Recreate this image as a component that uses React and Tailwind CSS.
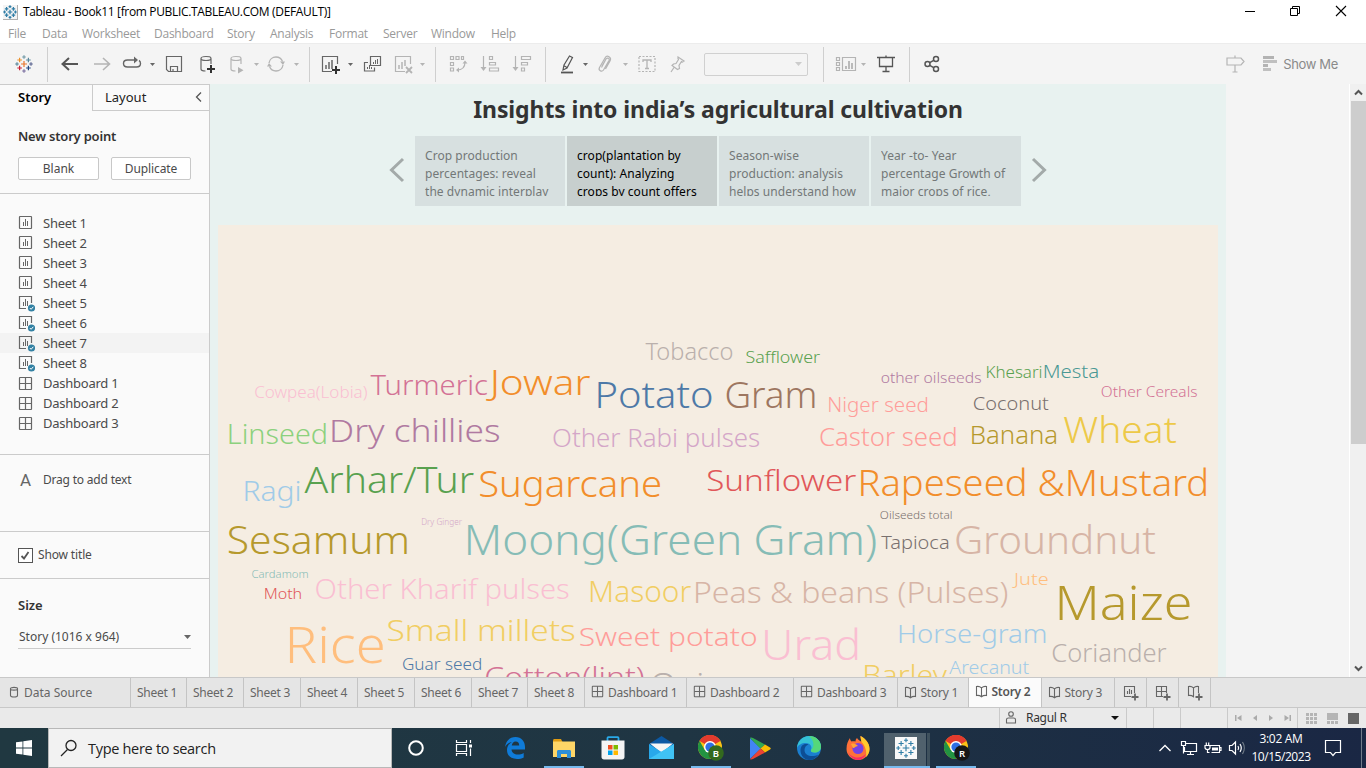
import React from "react";

const sans = "font-['Noto_Sans',sans-serif]";
const segoe = "font-['Open_Sans',sans-serif]";

/* ---------- word cloud: text, ink left, ink right, baseline, size, colour ---------- */
const WORDS = [
  ["Tobacco", 645.7, 732.3, 360, 23, "#bab0ac"],
  ["Safflower", 746.2, 819.9, 362.7, 16, "#59a14f"],
  ["Cowpea(Lobia)", 255, 366.7, 398, 16, "#fabfd2"],
  ["Turmeric", 370.7, 487.7, 395, 28, "#d37295"],
  ["Jowar", 490, 590, 394.7, 35, "#f28e2b"],
  ["Potato", 597.7, 711.7, 408, 36.5, "#4e79a7"],
  ["Gram", 726.2, 814.5, 408, 36.5, "#9d7660"],
  ["other oilseeds", 881.4, 980.8, 382.7, 14.5, "#b07aa1"],
  ["Khesari", 986.9, 1041.3, 377.3, 16, "#59a14f"],
  ["Mesta", 1044.3, 1098.3, 378, 18, "#499894"],
  ["Other Cereals", 1101.5, 1196.8, 397, 14.5, "#d37295"],
  ["Niger seed", 829, 927.3, 412, 19.5, "#ff9d9a"],
  ["Coconut", 973.7, 1048.7, 410, 19, "#79706e"],
  ["Linseed", 229.3, 325.9, 443.7, 27.5, "#8cd17d"],
  ["Dry chillies", 332, 499, 441.7, 32, "#b07aa1"],
  ["Other Rabi pulses", 553.3, 759, 447, 25, "#d4a6c8"],
  ["Castor seed", 820.2, 955.8, 446, 25, "#ff9d9a"],
  ["Banana", 972, 1056.9, 444, 25, "#b6992d"],
  ["Wheat", 1063.6, 1176.5, 443, 36.5, "#edc948"],
  ["Ragi", 245, 299.3, 501, 28, "#a0cbe8"],
  ["Arhar/Tur", 305, 473.7, 492.7, 36, "#59a14f"],
  ["Sugarcane", 480, 660.3, 496.3, 36, "#f28e2b"],
  ["Sunflower", 707.7, 856, 490.7, 30, "#e15759"],
  ["Rapeseed &Mustard", 860.8, 1206.3, 495.7, 36.5, "#f28e2b"],
  ["Oilseeds total", 880.4, 951.7, 519, 11, "#79706e"],
  ["Tapioca", 881.4, 948.7, 549, 18.5, "#79706e"],
  ["Groundnut", 955.8, 1155.6, 553.7, 38.5, "#d7b5a6"],
  ["Moong(Green Gram)", 467.7, 875, 554.7, 43, "#86bcb6"],
  ["Dry Ginger", 422, 461.9, 525, 8.5, "#d4a6c8"],
  ["Sesamum", 228.7, 407, 553.7, 38, "#b6992d"],
  ["Cardamom", 252, 307.7, 578, 10.5, "#86bcb6"],
  ["Moth", 265, 301, 598.7, 15, "#e15759"],
  ["Other Kharif pulses", 316, 568.3, 598.7, 28, "#fabfd2"],
  ["Masoor", 590.7, 691, 601.7, 28.5, "#f1ce63"],
  ["Peas & beans (Pulses)", 695.7, 1006.8, 602.7, 30, "#d7b5a6"],
  ["Jute", 1014.3, 1047.8, 585, 16, "#ffbe7d"],
  ["Maize", 1058.9, 1190, 619.7, 48.5, "#b6992d"],
  ["Horse-gram", 899.3, 1045.4, 642.7, 26, "#a0cbe8"],
  ["Rice", 289, 383.3, 662.7, 49.5, "#ffbe7d"],
  ["Small millets", 388, 574.3, 640.7, 29.5, "#f1ce63"],
  ["Sweet potato", 580, 756.3, 645.7, 26.5, "#ff9d9a"],
  ["Urad", 765, 857.7, 659.7, 43, "#fabfd2"],
  ["Coriander", 1052.5, 1166.4, 661.7, 25, "#bab0ac"],
  ["Arecanut", 949.4, 1029, 674, 18, "#a0cbe8"],
  ["Guar seed", 402.7, 481, 669.7, 16, "#4e79a7"],
  ["Cotton(lint)", 485.7, 643.3, 686.7, 28, "#d37295"],
  ["Onion", 651.5, 742, 695, 32, "#bab0ac"],
  ["Barley", 864.8, 946.6, 684.6, 27, "#f1ce63"],
];

function leftBearing(c) {
  if ("TWAJ".includes(c)) return 0.01;
  if ("SCGOo".includes(c)) return 0.05;
  return 0.09;
}
function rightBearing(c) {
  if ("rtyc".includes(c)) return 0.01;
  if ("so)ae".includes(c)) return 0.05;
  return 0.08;
}

function WordCloud() {
  return (
    <svg width="1000" height="452" viewBox="218 225 1000 452" className="block bg-[#f5ede2] font-['Noto_Sans',sans-serif] font-[350]">
      {WORDS.map(([t, l, r, y, s, c]) => {
        const x = l - leftBearing(t[0]) * s;
        const w = r + rightBearing(t[t.length - 1]) * s - x;
        return (
          <text key={t} x={x} y={y + 0.4} fontSize={s} fill={c} textLength={w} lengthAdjust="spacingAndGlyphs">{t}</text>
        );
      })}
    </svg>
  );
}

/* ---------- icons ---------- */
function Svg({ w = 20, h = 20, c = "#666", sw = 1.2, children, className = "" }) {
  return (
    <svg width={w} height={h} viewBox={`0 0 ${w} ${h}`} fill="none" stroke={c} strokeWidth={sw} className={`shrink-0 ${className}`}>{children}</svg>
  );
}
const G = "#b4b4b4";

function TableauMark({ size = 18, mono = false, sw = 1.2 }) {
  const p = [
    [9, 9, 3, "#e8762c"], [9, 2, 1.8, "#7199a6"], [9, 16, 1.8, "#7b6fa0"], [2, 9, 1.8, "#5b879b"], [16, 9, 1.8, "#5c6692"],
    [4.6, 5, 2.3, "#eb912c"], [13.4, 5, 2.3, "#59879b"], [4.6, 13, 2.3, "#c72035"], [13.4, 13, 2.3, "#1f447e"],
  ];
  return (
    <svg width={size} height={size} viewBox="0 0 18 18" className="shrink-0">
      {p.map(([x, y, r, c], i) => (
        <path key={i} d={`M${x - r} ${y}h${2 * r}M${x} ${y - r}v${2 * r}`} stroke={mono ? "#2f7da6" : c} strokeWidth={sw} />
      ))}
    </svg>
  );
}
const Caret = ({ c = "#666", w = 5 }) => <svg width={w} height={w > 5 ? 4 : 3} viewBox="0 0 6 3" preserveAspectRatio="none" className="shrink-0"><path d="M0 0h6L3 3z" fill={c} /></svg>;
const Cyl = ({ c }) => <path d="M15 10V4.500C15 3 12.700 2.500 10 2.500S5 3 5 4.500V15C5 16.500 7 17 9.500 17M5 4.500C5 6 7.500 6.500 10 6.500S15 6 15 4.500" stroke={c} />;

const SheetIcon = ({ check }) => (
  <Svg w={17} h={17} c="#666" sw={1}>
    {check ? <path d="M13.500 8V1.500H1.500V13.500H8" strokeWidth="1.200" /> : <rect x="1.500" y="1.500" width="12" height="12" rx=".5" strokeWidth="1.200" />}
    <path d="M5.500 7v4M7.500 4v7M9.500 6v5" />
    {check && <><circle cx="13.500" cy="13" r="3.600" fill="#3381a3" stroke="none" /><path d="M11.800 13l1.300 1.300 2.200-2.500" stroke="#fff" /></>}
  </Svg>
);
const DashIcon = ({ s = 15 }) => (
  <svg width={s} height={s} viewBox="0 0 15 15" fill="none" stroke="#666" className="shrink-0"><rect x="1.500" y="1.500" width="12" height="12" rx=".5" strokeWidth="1.200" /><path d="M7.500 1.500v12M1.500 7.500h12" strokeWidth="1.200" /></svg>
);
const StoryIcon = () => <Svg w={13} h={13} c="#666" sw={1.1}><path d="M1.500 1.500C3.500 1 5 1.500 6.500 2.800 8 1.500 9.500 1 11.500 1.500V10.500C9.500 10.200 8 10.500 6.500 11.700 5 10.500 3.500 10.200 1.500 10.500zM6.500 2.800v8.900" /></Svg>;

/* ---------- title, menu, toolbar ---------- */
function TitleBar() {
  return (
    <div className={`flex h-6 items-center bg-white text-[12px] text-black ${segoe}`}>
      <div className="ml-[3px] flex h-[15px] w-[15px] items-center justify-center border-b border-r border-[#b0b0b0] bg-[#f4f4f4]"><TableauMark size={14} mono sw={1.6} /></div>
      <div className="ml-[5px] whitespace-pre text-[12px] tracking-[-0.34px]">Tableau - Book11 [from PUBLIC.TABLEAU.COM (DEFAULT)]</div>
      <div className="ml-auto flex items-center pb-[3px] pr-[19px]">
        <Svg w={12} h={12} c="#000" sw={1}><path d="M1 6.500h10" /></Svg>
        <Svg w={12} h={12} c="#000" sw={1} className="ml-[33px]"><path d="M1.500 3.500h7v7h-7zM3.500 3.500v-2h7v7h-2" /></Svg>
        <Svg w={12} h={12} c="#000" sw={1.1} className="ml-[34px]"><path d="M1 1l10 10M11 1L1 11" /></Svg>
      </div>
    </div>
  );
}

function MenuBar() {
  const items = [["File", "w-[34px]"], ["Data", "w-10"], ["Worksheet", "w-[72px]"], ["Dashboard", "w-[73px]"], ["Story", "w-[43px]"], ["Analysis", "w-[59px]"], ["Format", "w-[54px]"], ["Server", "w-12"], ["Window", "w-[60px]"], ["Help", "w-10"]];
  return (
    <div className={`flex h-[19px] items-center bg-white pl-2 text-[12px] text-[#999] ${segoe}`}>
      {items.map(([t, w]) => <div key={t} className={`shrink-0 tracking-[-0.25px] ${w}`}>{t}</div>)}
    </div>
  );
}

const Slot = ({ w, children }) => <div className={`flex h-full shrink-0 items-center justify-center ${w}`}>{children}</div>;
const Sep = ({ m }) => <div className={`h-[35px] w-px shrink-0 bg-[#cfcfcf] ${m}`} />;

function Toolbar() {
  return (
    <div className="flex h-[41px] items-center border-t border-[#ececec] bg-[#f4f4f4]">
      <Slot w="w-[47px]"><TableauMark size={18} /></Slot>
      <Sep m="mr-[6px]" />
      <Slot w="w-8"><Svg c="#555" sw={2}><path d="M18 10H3M9 4l-6.500 6L9 16" /></Svg></Slot>
      <Slot w="w-8"><Svg c={G} sw={1.6}><path d="M2 10h15M11 4l6.500 6-6.500 6" /></Svg></Slot>
      <Slot w="w-7"><Svg c="#666" sw={1.4}><path d="M14 6H5.500C3 6 1.500 7.500 1.500 9.500S3 13 5.500 13H14.500C17 13 18.500 11.500 18.500 9.500 18.500 8 18 7 17 6.500" /><path d="M12 2.500L16 6l-4 3.500z" fill="#666" stroke="none" /></Svg></Slot>
      <Slot w="w-3"><Caret /></Slot>
      <Slot w="w-8"><Svg><path d="M2.500 2.500h15v15h-13l-2-2zM6.500 17.500v-5h7v5M9 17.500v-2.500" /></Svg></Slot>
      <Slot w="w-8"><Svg><Cyl c="#666" /><path d="M15 11v8M11 15h8" stroke="#333" strokeWidth="2" /></Svg></Slot>
      <Slot w="w-7"><Svg><Cyl c={G} /><path d="M12 13l5.500 3.200L12 19.500z" fill={G} stroke="none" /></Svg></Slot>
      <Slot w="w-3"><Caret c={G} /></Slot>
      <Slot w="w-7"><Svg c={G} sw={1.3}><path d="M3 9C3.500 5.500 6.500 3 10 3c3.200 0 5.500 1.800 6.500 4.500M17 11c-.500 3.500-3.500 6-7 6-3.200 0-5.500-1.800-6.500-4.500" /><path d="M14 7.500h5L17 11zM1 12.500h5L3 9z" fill={G} stroke="none" /></Svg></Slot>
      <Slot w="w-3"><Caret c={G} /></Slot>
      <Sep m="ml-[7px] mr-[6px]" />
      <Slot w="w-7"><Svg><path d="M17.500 10V2.500h-15v15H12" /><path d="M6 11v4M9 8v7M12 6v9" strokeWidth="1.500" /><path d="M16 12v8M12 16h8" stroke="#333" strokeWidth="2" /></Svg></Slot>
      <Slot w="w-3"><Caret /></Slot>
      <Slot w="w-8"><Svg><path d="M8.500 2.500h10v9h-10zM6 8.500H2.500v8.500h10V13.500" strokeWidth="1.200" /><path d="M11.500 8v2M13.500 6v4M15.500 5v5M5.500 13v2M7.500 11v4M9.500 13v2" strokeWidth="1" /></Svg></Slot>
      <Slot w="w-[30px]"><Svg c={G}><path d="M17.500 10V2.500h-15v15H12" /><path d="M6 11v4M9 8v7M12 6v6" strokeWidth="1.500" /><path d="M13 13l6 6M19 13l-6 6" strokeWidth="1.800" /></Svg></Slot>
      <Slot w="w-2"><Caret c={G} /></Slot>
      <Sep m="ml-[9px] mr-[6px]" />
      <Slot w="w-8"><Svg c={G}><path d="M2.500 2.500h3v3h-3zM8 2.500h3v3H8zM13.500 2.500h2v3h-2zM2.500 8.500h3v3h-3zM2.500 14h3v3h-3zM17 8c0 5-3 8-8 8" /><path d="M14.500 9.500L17 6.500l2.500 3zM11 13.500v5L8 16z" fill={G} stroke="none" /></Svg></Slot>
      <Slot w="w-8"><Svg c={G} sw={1.2}><path d="M3.500 2v12M9.500 2.500h3v3h-3zM9.500 8.500h6v2.500h-6zM9.500 14h9v3h-9z" /><path d="M.5 13h6l-3 4z" fill={G} stroke="none" /></Svg></Slot>
      <Slot w="w-8"><Svg c={G} sw={1.2}><path d="M3.500 2v12M9.500 2.500h9v3h-9zM9.500 8.500h6v2.500h-6zM9.500 14h3v3h-3z" /><path d="M.5 13h6l-3 4z" fill={G} stroke="none" /></Svg></Slot>
      <Sep m="ml-[7px] mr-[9px]" />
      <Slot w="w-[25px]"><Svg c="#555"><path d="M11.500 2l3 1.500L9 14l-4 2 1-5zM5.500 11.500L9 13.500" /><path d="M3 18.500h12" strokeWidth="1.800" /></Svg></Slot>
      <Slot w="w-[10px]"><Caret /></Slot>
      <Slot w="w-[30px]"><Svg c={G}><path d="M6.500 13.500L11 5c1.500-2 4-.5 3 1.500L8.500 16c-1.800 2.500-5.500.500-4-2.500L10 4c2-3.500 7-1 5 3l-4.500 8M7 12l4-7" /></Svg></Slot>
      <Slot w="w-[10px]"><Caret c={G} /></Slot>
      <Slot w="ml-[2px] w-[30px]"><Svg c={G}><path d="M2 2.500h16v15H2z" strokeDasharray="2 1.500" /><path d="M6 8V6h8v2M10 6v8.500M8 14.500h4" strokeWidth="1.300" /></Svg></Slot>
      <Slot w="w-[30px]"><Svg c={G}><path d="M11 3l6 4-1.500 1-1-.5-2.500 4 .5 3-2 1-5.500-4 1.500-1.500 2.500-.5 2.500-4-.5-1zM7 13.500L4 18" /></Svg></Slot>
      <div className="ml-[12px] flex h-[23px] w-[104px] shrink-0 items-center justify-end rounded-[2px] border border-[#d0d0d0] pr-[5px]"><Caret c="#ccc" w={7} /></div>
      <Sep m="ml-[15px] mr-[10px]" />
      <Slot w="w-6"><Svg c={G} w={22}><path d="M1.500 3.500h3v3h-3zM1.500 8.500h3v3h-3zM1.500 13.500h3v3h-3zM7.500 3.500h13v13h-13z" /><path d="M11 12v3M14 7v8M17 9v6" strokeWidth="1.800" /></Svg></Slot>
      <Slot w="w-[10px]"><Caret c={G} /></Slot>
      <Slot w="ml-[2px] w-8"><Svg c="#555" sw={1.3}><path d="M1 3.500h18M3.500 3.500v9h13v-9M10 1.500v2M10 12.500v5M6.500 17.500h7" /></Svg></Slot>
      <Sep m="ml-[7px] mr-[6px]" />
      <Slot w="w-8"><Svg c="#555" sw={1.5}><circle cx="5.500" cy="10" r="2.500" /><circle cx="14" cy="5" r="2.500" /><circle cx="14" cy="15" r="2.500" /><path d="M7.700 8.700l4-2.400M7.700 11.300l4 2.400" /></Svg></Slot>
      <div className="ml-auto flex items-center">
        <Svg c={G}><path d="M2 4.500h14l3 3.500-3 3.500H2zM10 2v2.500M10 11.500v7M7.500 18.500h5" transform="translate(0 -.5)" /></Svg>
        <svg width="15" height="16" className="ml-[18px]"><path d="M0 0h11v3H0zM0 8h5v3H0z" fill="#b3b3b3" /><path d="M0 4h14v3H0zM0 12h8v3H0z" fill="#c0c0c0" /></svg>
        <span className="ml-[5px] mr-[28px] font-['Inter',sans-serif] text-[13px] leading-4 tracking-[-0.35px] text-[#8a8a8a]">Show Me</span>
      </div>
    </div>
  );
}

/* ---------- side panel ---------- */
function SidePanel() {
  const rows = [
    ...[1, 2, 3, 4, 5, 6, 7, 8].map((n) => ["Sheet " + n, n > 4 ? "check" : "sheet"]),
    ...[1, 2, 3].map((n) => ["Dashboard " + n, "dash"]),
  ];
  return (
    <aside className={`flex h-[593px] w-[210px] shrink-0 flex-col border-r border-t border-[#cbcbcb] bg-[#fafafa] text-[13px] text-[#4a4a4a] ${sans}`}>
      <div className="flex h-[26px] shrink-0">
        <div className="w-[92px] pl-[18px] text-[13px] font-semibold leading-[25px] text-black">Story</div>
        <div className="flex flex-1 items-center justify-between border-b border-l border-[#cbcbcb] pb-px pl-3 pr-[5px] text-[#222]">
          <span className="leading-[23px]">Layout</span>
          <Svg w={10} h={12} c="#555" sw={1.3}><path d="M7 1.500L2.500 6 7 10.500" /></Svg>
        </div>
      </div>
      <div className="h-[83px] shrink-0 border-b border-[#cbcbcb] px-[18px] pt-[16px]">
        <div className="text-[13px] font-semibold leading-[18px] tracking-[-0.2px] text-[#333]">New story point</div>
        <div className="mt-3 flex gap-3 text-[12px]">
          <div className="h-[23px] w-[81px] rounded-[2px] border border-[#c8c8c8] bg-white text-center leading-[21px]">Blank</div>
          <div className="h-[23px] w-[80px] rounded-[2px] border border-[#c8c8c8] bg-white text-center leading-[21px] tracking-[-0.1px]">Duplicate</div>
        </div>
      </div>
      <div className="h-[261px] shrink-0 border-b border-[#cbcbcb] pt-[19px]">
        {rows.map(([t, k]) => (
          <div key={t} className={`flex h-5 items-center pl-[18px] ${t === "Sheet 7" ? "bg-[#f3f3f3]" : ""}`}>
            <div className="w-[25px]">{k === "dash" ? <DashIcon /> : <SheetIcon check={k === "check"} />}</div>
            <span className="pt-px tracking-[-0.25px]">{t}</span>
          </div>
        ))}
      </div>
      <div className="flex h-[77px] shrink-0 border-b border-[#cbcbcb] pl-[20px] pt-[13px]">
        <span className="w-[23px] font-['Roboto',sans-serif] text-[17px] leading-6 text-[#666]">A</span>
        <span className="text-[12px] leading-6 tracking-[-0.2px]">Drag to add text</span>
      </div>
      <div className="flex h-[47px] shrink-0 items-center border-b border-[#cbcbcb] pl-[18px] text-[12px]">
        <div className="flex h-[15px] w-[15px] items-center justify-center border border-[#555] bg-white"><Svg w={11} h={11} c="#555" sw={1.8}><path d="M1.500 6l2.500 2.500 4.500-6.500" /></Svg></div>
        <span className="ml-[5px] tracking-[-0.15px]">Show title</span>
      </div>
      <div className="px-[18px] pt-[17px]">
        <div className="text-[13px] font-semibold leading-[18px] text-[#333]">Size</div>
        <div className="mt-[12px] flex h-[23px] w-[173px] items-center justify-between border-b border-[#cbcbcb] text-[12px]"><span className="pl-px">Story (1016 x 964)</span><Caret w={7} /></div>
      </div>
    </aside>
  );
}

/* ---------- story canvas ---------- */
function Story() {
  const points = [
    ["Crop production", "percentages: reveal", "the dynamic interplay"],
    ["crop(plantation by", "count): Analyzing", "crops by count offers"],
    ["Season-wise", "production: analysis", "helps understand how"],
    ["Year -to- Year", "percentage Growth of", "major crops of rice,"],
  ];
  return (
    <main className={`flex h-[593px] w-[1016px] shrink-0 flex-col bg-[#e8f2f0] px-2 ${sans}`}>
      <h1 className="h-[52px] text-center text-[23px] font-bold leading-[50px] tracking-[-0.1px] text-[#333]">Insights into india’s agricultural cultivation</h1>
      <div className="flex h-[70px] items-center justify-center">
        <Svg w={18} h={26} c="#a3aaa9" sw={3} className="mb-[2px] mr-[9px]"><path d="M15 2L3.500 13 15 24" /></Svg>
        <div className="flex gap-[2px]">
          {points.map((lines, i) => (
            <div key={i} className={`h-[70px] w-[150px] px-[10px] pt-[11px] text-[12px] leading-[18px] ${i === 1 ? "bg-[#c7cfce] text-black" : "bg-[#d7e0e0] text-[#737878]"}`}>
              <div className="h-[49px] overflow-hidden">{lines.map((l) => <div key={l} className="whitespace-nowrap tracking-[0.05px]">{l}</div>)}</div>
            </div>
          ))}
        </div>
        <Svg w={18} h={26} c="#a3aaa9" sw={3} className="mb-[2px] ml-[9px]"><path d="M3 2l11.500 11L3 24" /></Svg>
      </div>
      <div className="pt-[19px]"><WordCloud /></div>
    </main>
  );
}

function ScrollBar() {
  return (
    <div className="ml-auto flex h-[593px] w-[17px] flex-col items-center border-l border-white bg-[#f0f0f0]">
      <div className="flex h-[17px] items-center"><Svg w={9} h={7} c="#555" sw={2}><path d="M1 5.500l3.500-3.500L8 5.500" /></Svg></div>
      <div className="h-[343px] w-[15px] bg-[#cdcdcd]" />
      <div className="mt-auto flex h-[17px] items-center"><Svg w={9} h={7} c="#555" sw={2}><path d="M1 1.500L4.500 5 8 1.500" /></Svg></div>
    </div>
  );
}

/* ---------- bottom tabs and status ---------- */
function BottomTabs() {
  const tabs = [
    ["Sheet 1", "w-[56px]", ""], ["Sheet 2", "w-[57px]", ""], ["Sheet 3", "w-[57px]", ""], ["Sheet 4", "w-[57px]", ""], ["Sheet 5", "w-[57px]", ""], ["Sheet 6", "w-[57px]", ""], ["Sheet 7", "w-[56px]", ""], ["Sheet 8", "w-[57px]", ""],
    ["Dashboard 1", "w-[102px]", "dash"], ["Dashboard 2", "w-[107px]", "dash"], ["Dashboard 3", "w-[104px]", "dash"],
    ["Story 1", "w-[71px]", "story"], ["Story 2", "w-[73px]", "story"], ["Story 3", "w-[73px]", "story"],
  ];
  return (
    <div className={`flex h-[31px] border-b border-t border-[#c8c8c8] bg-[#e5e5e5] text-[12px] leading-[29px] text-[#666] ${sans}`}>
      <div className="flex w-[131px] shrink-0 items-center border-r border-[#c4c4c4] pl-[9px]">
        <Svg w={10} h={12} sw={1.1} className="mb-[2px]"><path d="M1.500 2.500C1.500 1 8.500 1 8.500 2.500V9.500C8.500 11.500 1.500 11.500 1.500 9.500zM1.500 3C1.500 4.500 8.500 4.500 8.500 3" /></Svg>
        <span className="ml-[5px]">Data Source</span>
      </div>
      {tabs.map(([t, w, k]) => (
        <div key={t} className={`flex shrink-0 items-center whitespace-nowrap border-r border-[#c4c4c4] pl-[6px] tracking-[-0.25px] ${w} ${t === "Story 2" ? "bg-[#fbfbfb] pb-[2px] font-semibold text-[#555]" : ""}`}>
          {k === "dash" && <span className="mb-[2px]"><DashIcon s={13} /></span>}
          {k === "story" && <StoryIcon />}
          <span className={k === "dash" ? "ml-1" : k ? "ml-[3.5px]" : ""}>{t}</span>
        </div>
      ))}
      {["sheet", "dash", "story"].map((k) => (
        <div key={k} className="flex w-8 shrink-0 items-center justify-center border-r border-[#c4c4c4]">
          <Svg w={16} h={16} sw={1.1}>
            {k === "sheet" && <path d="M11.500 8V1.500H1.500v10H8M4.500 6v3M6.500 4v5M8.500 5v4" />}
            {k === "dash" && <path d="M11.500 8V1.500H1.500v10H8M6.500 1.500v10M1.500 6.500h10" />}
            {k === "story" && <path d="M11.500 8V1.500C9.500 1 8 1.500 6.500 2.800 5 1.500 3.500 1 1.500 1.500v9c2-.3 3.500 0 5 1.200V2.800" />}
            <path d="M12 8.500v7M8.500 12h7" strokeWidth="1.800" />
          </Svg>
        </div>
      ))}
    </div>
  );
}

function StatusBar() {
  return (
    <div className={`flex h-5 items-center justify-end bg-[#eaeaea] text-[12px] text-[#333] ${sans}`}>
      <div className="flex h-full w-[128px] items-center border-x border-[#cacaca] pl-[5px]">
        <Svg w={12} h={14} c="#666" sw={1.1} className="mb-[2px]"><circle cx="6" cy="4" r="2.300" /><path d="M1.500 13V9.500c0-1 1-1.500 2-1.500h5c1 0 2 .5 2 1.500V13z" /></Svg>
        <span className="ml-[9px] tracking-[-0.3px]">Ragul R</span>
        <span className="ml-auto mr-[7px] flex"><svg width="8" height="4"><path d="M0 0h8L4 4z" fill="#111" /></svg></span>
      </div>
      <div className="h-full w-[27px] border-r border-[#cacaca]" />
      <div className="h-full w-[27px] border-r border-[#cacaca]" />
      <div className="h-full w-[47px] border-r border-[#cacaca]" />
      <div className="flex h-full w-[70px] items-center justify-center gap-2 border-r border-[#cacaca]">
        <svg width="8" height="8" fill="#aaa"><path d="M0 1h1.500v6H0zM6.500 1v6L2 4z" /></svg>
        <svg width="8" height="8" fill="#aaa"><path d="M6 1v6L2 4z" /></svg>
        <svg width="8" height="8" fill="#aaa"><path d="M2 1v6l4-3z" /></svg>
        <svg width="8" height="8" fill="#aaa"><path d="M6.500 1H8v6H6.500zM1.500 1v6L6 4z" /></svg>
      </div>
      <div className="flex w-[68px] items-center gap-[10px] pl-2">
        <svg width="11" height="11" fill="#b5b5b5">{[0, 4, 8].map((y) => [0, 4, 8].map((x) => <rect key={x + "-" + y} x={x} y={y} width="3" height="3" />))}</svg>
        <svg width="11" height="11" fill="#b5b5b5"><path d="M0 0h11v7H0zM0 8h3v3H0zM4 8h3v3H4zM8 8h3v3H8z" /></svg>
        <svg width="11" height="11" fill="#666"><path d="M0 0h11v11H0z" /></svg>
      </div>
    </div>
  );
}

/* ---------- taskbar ---------- */
function Chrome({ badge, bg }) {
  return (
    <svg width="28" height="26" viewBox="0 0 28 26">
      <circle cx="12" cy="12" r="12" fill="#fbc116" />
      <path d="M12 12L1.600 6A12 12 0 0 1 22.400 6z" fill="#e33b2e" />
      <path d="M12 6H22.400A12 12 0 0 0 1.600 6z" fill="#e33b2e" />
      <path d="M1.600 6A12 12 0 0 0 12 24L17.200 15 12 12 6.800 15z" fill="#229342" />
      <circle cx="12" cy="12" r="6" fill="#fff" /><circle cx="12" cy="12" r="4.600" fill="#2f6fe4" />
      <circle cx="18" cy="18" r="7.800" fill={bg} />
      <text x="18" y="21.500" textAnchor="middle" fontSize="9.500" fill="#fff" className="font-['Noto_Sans',sans-serif] font-semibold">{badge}</text>
    </svg>
  );
}
const TaskItem = ({ w, children, line }) => (
  <div className={`relative flex h-full shrink-0 items-center justify-center ${w}`}>
    {children}
    {line && <div className="absolute bottom-0 h-[2px] w-10 bg-[#76b9ed]" />}
  </div>
);

function Taskbar() {
  return (
    <div className={`flex h-10 bg-linear-to-r from-[#203841] via-[#1f3543] to-[#1a2744] text-white ${segoe}`}>
      <div className="flex w-12 shrink-0 items-center justify-center"><svg width="16" height="16" fill="#fff"><path d="M0 2.300L6.500 1.400V7.600H0zM7.300 1.300L16 0v7.600H7.300zM0 8.400h6.500v6.200L0 13.700zM7.300 8.400H16V16l-8.700-1.300z" /></svg></div>
      <div className="flex w-[344px] shrink-0 items-center border border-[#b8b8b8] bg-[#f2f2f2] pl-[11px] text-[#222]">
        <Svg w={18} h={18} c="#222" sw={1.3}><circle cx="11" cy="6.500" r="5" /><path d="M7.500 10.500L1 17" /></Svg>
        <span className="ml-[10px] pt-px text-[14.5px] tracking-[-0.3px]">Type here to search</span>
      </div>
      <TaskItem w="w-12"><Svg c="#fff" sw={2}><circle cx="10" cy="10" r="6.800" /></Svg></TaskItem>
      <TaskItem w="w-[47px]"><Svg w={18} h={18} c="#fff" sw={1.2}><path d="M1.500 1v2.500h10V1M1.500 17v-2.500h10V17M1.500 5.500h10v7h-10zM15.500 1v3M15.500 9.500V17" /><path d="M14 5.500h3v3h-3z" fill="#fff" stroke="none" /></Svg></TaskItem>
      <TaskItem w="w-[56px]">
        <svg width="20" height="22" viewBox="0 0 20 22"><path d="M0 10C1 3.500 5 0 10.500 0 16.500 0 20 4.500 20 10v2.500H6.500c.3 3.500 3 5 6.200 5 2.300 0 4.300-.6 6-1.600v4.500C16.700 21.500 14.500 22 12 22 6 22 2 18.500 2 13c0-3.500 2-6.500 5-8C4 5.500 1.500 7.500 0 10zm6.800-1.500h7.400c0-2.500-1.300-4-3.500-4-2.300 0-3.600 1.700-3.900 4z" fill="#0f7bd8" /></svg>
      </TaskItem>
      <TaskItem w="w-[42px]" line><svg width="22" height="19"><path d="M0 1.500C0 .7.500 0 1.500 0H8l1.500 3H0z" fill="#e09b12" /><path d="M0 2.500h22V18H0z" fill="#ffd667" /><path d="M4 19v-6.500c0-1 .7-1.500 1.500-1.500h11c.8 0 1.500.5 1.500 1.500V19h-4v-4H8v4z" fill="#2d8fd8" /></svg></TaskItem>
      <TaskItem w="w-[55px]"><svg width="24" height="24"><path d="M6.500 5.500V2c0-.5.300-.8.800-.8h9.400c.5 0 .8.300.8.800v3.500" fill="none" stroke="#29a9e8" strokeWidth="1.800" /><path d="M.5 4.500h23V21c0 1.500-1 2.500-2.500 2.500H3C1.500 23.500.5 22.500.5 21z" fill="#f4f4f4" /><path d="M7 9h4.500v4.500H7z" fill="#f25022" /><path d="M12.500 9H17v4.500h-4.500z" fill="#7fba00" /><path d="M7 14.500h4.500V19H7z" fill="#00a4ef" /><path d="M12.500 14.500H17V19h-4.500z" fill="#ffb900" /></svg></TaskItem>
      <TaskItem w="w-[43px]"><svg width="25" height="24"><path d="M0 8L12.500 0 25 8v8H0z" fill="#0c59a4" /><path d="M1 7.500h23L12.500 17z" fill="#f5f5f5" /><path d="M0 8l12.500 8L25 8v15H0z" fill="#28a8ea" /><path d="M0 23L25 8v15z" fill="#40c3f5" /></svg></TaskItem>
      <TaskItem w="w-[55px]" line><div className="ml-[3px]"><Chrome badge="B" bg="#33691e" /></div></TaskItem>
      <TaskItem w="w-[43px]"><svg width="22" height="23" viewBox="0 0 22 23"><path d="M1 1v21l11-10.500z" fill="#4285f4" /><path d="M1 .8C2 .3 3 .5 4 1l12 6.500-4.500 4.200z" fill="#34a853" /><path d="M16 7.500l5 3c1 .7 1 1.500 0 2.100l-5 2.900-4.500-4z" fill="#fbbc04" /><path d="M11.500 11.500L16 15.500 4 22c-1 .5-2 .7-3 .2z" fill="#ea4335" /></svg></TaskItem>
      <TaskItem w="w-[55px]"><svg width="24" height="24" viewBox="0 0 24 24"><circle cx="12" cy="12" r="12" fill="#1b7fd0" /><path d="M0 12C.5 5 5.500 0 12 0c7 0 12 5 12 10.500 0 4-3 6-6.500 6-3 0-4-1-3.500-2.500 1.500-3-.5-7-5-7C4.500 7 1 9 0 12z" fill="#35c1d5" /><path d="M12 0c7 0 12 5 12 10.500 0 4-3 6-6.500 6-3 0-4-1-3.500-2.500C18 11 17 4 12 0z" fill="#55d879" /><path d="M7.500 14c0-3 2-5 4-5.500-4-1.500-8 .5-8 6 0 5 4 9.500 8.500 9.500 4 0 7.500-2 9.500-5.500-6 3-14 1.500-14-4.500z" fill="#0d4d94" /></svg></TaskItem>
      <TaskItem w="w-[43px]"><svg width="24" height="24" viewBox="0 0 24 24"><path d="M4 2c0 1.500.5 2.500 1.500 3.500C7 5 8 5 9.500 5.500 9.500 4 10 3 11 2c1 2 3 2.500 4.500 4C15 3.500 14 1.500 14.500 0c5 2.500 9 7 9 13 0 6-5 11-11.500 11S.5 19 .5 13C.5 8 2 5 4 2z" fill="#ff7139" /><path d="M14.500 0c5 2.500 9 7 9 13 0 3.500-1.500 6-3.500 8 1-5-.5-11-4.500-15z" fill="#ffcb2f" /><path d="M2 15c2 7 12 9 18 3-2 4-5 6-8 6S3 21 2 15z" fill="#f72c67" /><circle cx="12" cy="12.500" r="5.500" fill="#7542e5" /><path d="M5 8c3-1 5 0 7 2-3 .5-3 2-5 2z" fill="#ffa436" /></svg></TaskItem>
      <div className="ml-[5px] flex h-full w-[46px] shrink-0 flex-col">
        <div className="mt-[5px] flex flex-1">
          <div className="flex w-[42px] items-center justify-center bg-[#50616d] pb-[3px] pl-[2px]"><div className="flex h-[22px] w-[22px] items-center justify-center bg-[#f8f8f8]"><TableauMark size={20} mono sw={1} /></div></div>
          <div className="ml-px w-[3px] bg-[#3f515d]" />
        </div>
        <div className="h-[2px] w-[46px] bg-[#76b9ed]" />
      </div>
      <TaskItem w="w-[52px]" line><div className="ml-1"><Chrome badge="R" bg="#171717" /></div></TaskItem>
      <div className="ml-auto flex items-center">
        <Svg w={14} h={10} c="#fff" sw={1.3}><path d="M1.500 8L7 2.500 12.500 8" /></Svg>
        <Svg w={18} h={16} c="#fff" sw={1.2} className="ml-[8px]"><path d="M6 3.500h10.500v8H4.500V7M10.500 11.500v3M7 14.500h7M1.500 1.500h4v4h-4zM3.500 5.500v8" /></Svg>
        <Svg w={18} h={14} c="#fff" sw={1.2} className="ml-[6px]"><path d="M6 4.500h9.500v7h-8M15.500 6.500h1.500v3h-1.500M1 4.500h5v2c0 1.500-1 2-2.500 2S1 8 1 6.500zM2.300 4.500v-3M4.700 4.500v-3M3.500 8.500v3h2" /><path d="M8 6.500h6v3H8z" fill="#fff" stroke="none" /></Svg>
        <Svg w={18} h={16} c="#fff" sw={1.2} className="ml-[6px]"><path d="M1.500 5.500H4l3.500-3.500v12L4 10.500H1.500zM10 6c.8 1.300.8 2.700 0 4M12 4c1.600 2.500 1.600 5.500 0 8" /><path d="M14.500 2c2.300 3.500 2.300 8.500 0 12" stroke="#76818c" /></Svg>
        <div className="ml-[5px] w-[60px] text-center text-[12px] leading-[18px]">
          <div className="tracking-[-0.3px]">3:02 AM</div>
          <div className="tracking-[-0.45px]">10/15/2023</div>
        </div>
        <Svg w={18} h={18} c="#fff" sw={1.2} className="ml-[13px]"><path d="M1.500 1.500h15v12h-5L9 16.500 6.500 13.500h-5z" /></Svg>
        <div className="ml-[19px] mr-1 h-10 w-px bg-[#717b8a]" />
      </div>
    </div>
  );
}

export default function App() {
  return (
    <div className="flex h-[768px] w-[1366px] flex-col overflow-hidden bg-[#f4f4f4]">
      <TitleBar />
      <MenuBar />
      <Toolbar />
      <div className="flex h-[593px]">
        <SidePanel />
        <Story />
        <ScrollBar />
      </div>
      <BottomTabs />
      <StatusBar />
      <Taskbar />
    </div>
  );
}
